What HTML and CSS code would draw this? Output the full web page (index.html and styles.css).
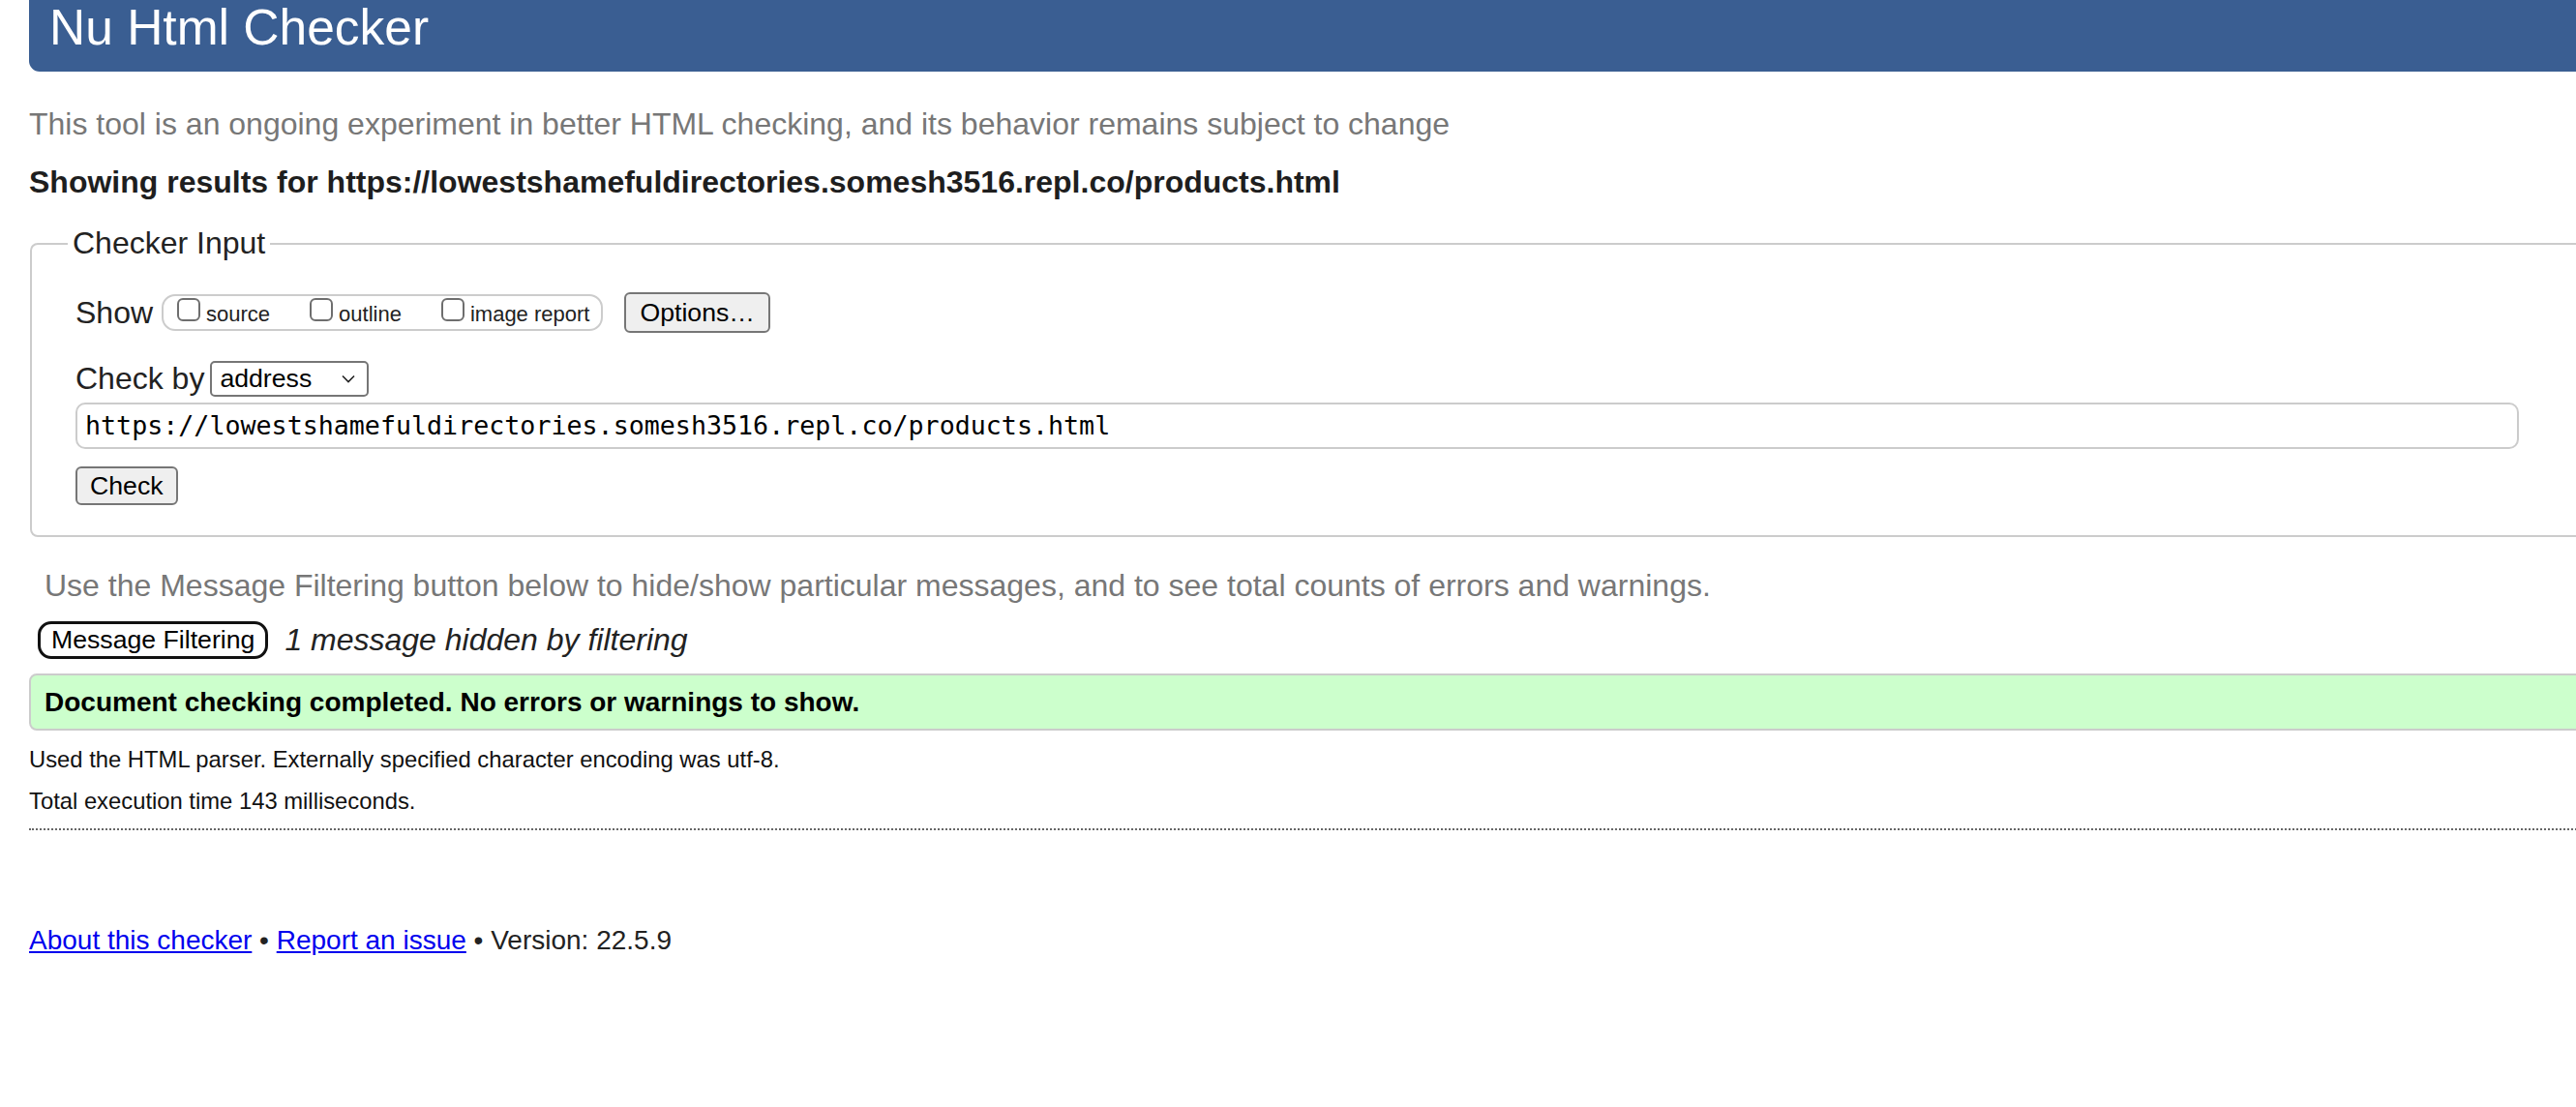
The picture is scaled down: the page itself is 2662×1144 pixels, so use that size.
FILE: index.html
```html
<!DOCTYPE html>
<html lang="en">
<head>
<meta charset="utf-8">
<title>Showing results for https://lowestshamefuldirectories.somesh3516.repl.co/products.html - Nu Html Checker</title>
<link rel="stylesheet" href="styles.css">
</head>
<body>
<div class="page">
  <h1 class="masthead">Nu Html Checker</h1>
  <p class="intro">This tool is an ongoing experiment in better HTML checking, and its behavior remains subject to change</p>
  <p class="showing">Showing results for https://lowestshamefuldirectories.somesh3516.repl.co/products.html</p>
  <form class="checker-form">
    <fieldset class="input-box">
      <legend class="input-legend">Checker Input</legend>
      <div class="row row-show">
        <span class="row-label">Show</span>
        <span class="show-group">
          <label class="show-item"><input type="checkbox" class="cb"><span class="cb-text">source</span></label>
          <label class="show-item spaced"><input type="checkbox" class="cb"><span class="cb-text">outline</span></label>
          <label class="show-item spaced"><input type="checkbox" class="cb"><span class="cb-text">image report</span></label>
        </span>
        <button type="button" class="btn btn-options">Options…</button>
      </div>
      <div class="row row-by">
        <span class="row-label">Check by</span>
        <span class="select-box"><span class="select-text">address</span><svg class="chev" width="14" height="9" viewBox="0 0 14 9"><path d="M1 1.5 L7 7.5 L13 1.5" fill="none" stroke="#222" stroke-width="1.6"/></svg></span>
      </div>
      <div class="url-box">https://lowestshamefuldirectories.somesh3516.repl.co/products.html</div>
      <div class="row row-check">
        <button type="button" class="btn btn-check">Check</button>
      </div>
    </fieldset>
  </form>
  <p class="filter-note">Use the Message Filtering button below to hide/show particular messages, and to see total counts of errors and warnings.</p>
  <div class="filter-row">
    <button type="button" class="filter-btn">Message Filtering</button>
    <em class="filter-count">1 message hidden by filtering</em>
  </div>
  <p class="success">Document checking completed. No errors or warnings to show.</p>
  <p class="details first">Used the HTML parser. Externally specified character encoding was utf-8.</p>
  <p class="details">Total execution time 143 milliseconds.</p>
  <hr class="dots">
  <p class="footer"><a href="#about">About this checker</a> • <a href="#report">Report an issue</a> • Version: 22.5.9</p>
</div>
</body>
</html>
```
FILE: styles.css
```css
html, body {
  margin: 0;
  padding: 0;
  overflow: hidden;
  background: #fff;
}
body {
  font-family: "Liberation Sans", Arial, Helvetica, sans-serif;
  color: #222;
}
.page {
  margin-left: 30px;
  width: 2640px;
}
.masthead {
  margin: 0;
  height: 74px;
  box-sizing: border-box;
  padding: 0 0 17px 21px;
  font-size: 51.5px;
  line-height: 57px;
  font-weight: normal;
  color: #fff;
  background: #3a5e92;
  border-radius: 0 0 0 11px;
}
.intro {
  margin: 36px 0 0;
  font-size: 32px;
  line-height: 37px;
  color: #777;
}
.showing {
  margin: 23px 0 0;
  font-size: 32px;
  line-height: 37px;
  font-weight: bold;
  color: #1e1e1e;
}
.checker-form {
  margin: 26px 0 0;
}
.input-box {
  margin: 0 0 0 1px;
  padding: 32px 0 31px 45px;
  border: 2px solid #ccc;
  border-radius: 8px;
  min-width: 0;
}
.input-legend {
  margin-left: -8px;
  padding: 0 5px;
  font-size: 32px;
  line-height: 37px;
  color: #222;
}
.row {
  display: flex;
  align-items: center;
}
.row-show {
  height: 42px;
}
.row-label {
  font-size: 32px;
  line-height: 37px;
  color: #222;
}
.row-show .row-label {
  margin-right: 9px;
}
.show-group {
  display: inline-flex;
  align-items: center;
  height: 38px;
  box-sizing: border-box;
  border: 2px solid #ccc;
  border-radius: 14px;
  padding: 0 12px 0 14px;
}
.show-item {
  display: inline-flex;
  align-items: center;
  height: 34px;
}
.show-item.spaced {
  margin-left: 41px;
}
.cb {
  -webkit-appearance: none;
  appearance: none;
  width: 24px;
  height: 24px;
  margin: 0 6px 6px 0;
  box-sizing: border-box;
  border: 2px solid #6e6e6e;
  border-radius: 6px;
  background: #fff;
}
.cb-text {
  font-size: 22px;
  line-height: 22px;
  color: #222;
  padding-top: 4px;
}
.btn {
  font-family: "Liberation Sans", Arial, Helvetica, sans-serif;
  font-size: 26.67px;
  line-height: 31px;
  color: #000;
  background: #efefef;
  border: 2px solid #767676;
  border-radius: 6px;
  padding: 0 13px;
  box-sizing: border-box;
}
.btn-options {
  height: 42px;
  margin-left: 22px;
  padding: 0 14px;
}
.btn-check {
  height: 40px;
}
.row-by {
  margin-top: 29px;
  height: 37px;
}
.row-by .row-label {
  margin-right: 6px;
}
.select-box {
  display: inline-flex;
  align-items: center;
  justify-content: space-between;
  width: 164px;
  height: 37px;
  box-sizing: border-box;
  border: 2px solid #767676;
  border-radius: 5px;
  padding: 0 12px 0 8px;
  background: #fff;
}
.select-text {
  font-size: 26.67px;
  line-height: 31px;
  color: #000;
}
.chev {
  display: block;
}
.url-box {
  margin-top: 6px;
  width: 2525px;
  height: 48px;
  box-sizing: border-box;
  border: 2px solid #ccc;
  border-radius: 10px;
  padding: 0 8px;
  font-family: "DejaVu Sans Mono", "Liberation Mono", monospace;
  font-size: 26.67px;
  line-height: 44px;
  color: #000;
}
.row-check {
  margin-top: 18px;
}
.filter-note {
  margin: 32px 0 0;
  padding-left: 16px;
  font-size: 32px;
  line-height: 37px;
  color: #777;
}
.filter-row {
  display: flex;
  align-items: center;
  margin-top: 18px;
  height: 38px;
}
.filter-btn {
  margin-left: 9px;
  height: 39px;
  box-sizing: border-box;
  border: 3px solid #111;
  border-radius: 14px;
  background: #fff;
  padding: 0 11px;
  font-family: "Liberation Sans", Arial, Helvetica, sans-serif;
  font-size: 26.67px;
  line-height: 30px;
  color: #000;
}
.filter-count {
  margin-left: 17px;
  font-size: 32px;
  line-height: 37px;
  font-style: italic;
  color: #222;
}
.success {
  margin: 16px 0 0;
  border: 2px solid #ccc;
  border-radius: 8px 0 0 8px;
  background: #ccffcc;
  padding: 0 0 0 14px;
  font-size: 28px;
  line-height: 55px;
  font-weight: bold;
  color: #000;
}
.details {
  margin: 15px 0 0;
  font-size: 23.8px;
  line-height: 28px;
  color: #111;
}
.details.first {
  margin-top: 16px;
}
.dots {
  margin: 14px 0 0;
  height: 0;
  border: 0;
  border-top: 2px dotted #666;
}
.footer {
  margin: 98px 0 0;
  font-size: 28px;
  line-height: 32px;
  color: #222;
}
.footer a {
  color: #0000ee;
  text-decoration: underline;
}
```
